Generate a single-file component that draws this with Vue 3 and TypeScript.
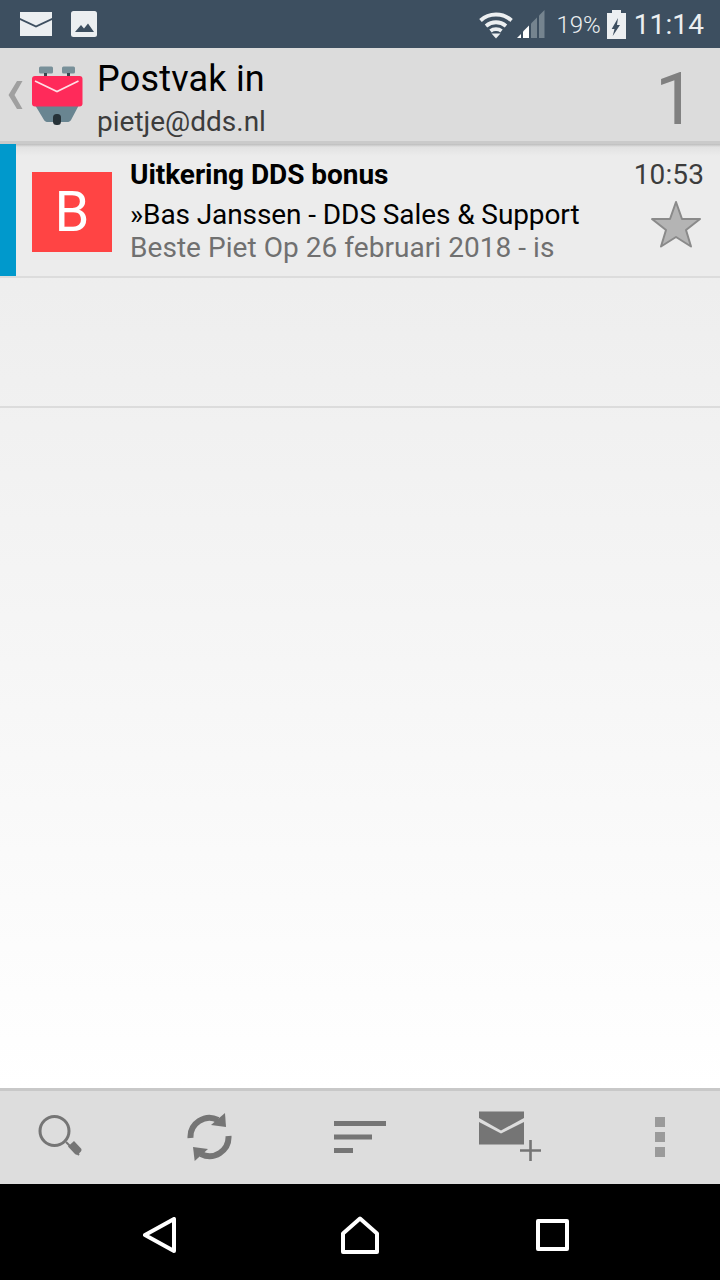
<template>
  <div class="screen">
    <div class="status-bar">
      <div class="status-left">
        <svg class="st-mail" width="32" height="24" viewBox="0 0 32 24">
          <path d="M0 0H32V6L16 13.5L0 6Z" fill="#eceff1" />
          <path d="M0 8L16 15.5L32 8V24H0Z" fill="#eceff1" />
        </svg>
        <svg class="st-image" width="26" height="26" viewBox="0 0 26 26">
          <rect width="26" height="26" rx="2.5" fill="#eceff1" />
          <path d="M4 21L10 14L13 17.5L17 12.5L23 21Z" fill="#3d4f60" />
        </svg>
      </div>
      <div class="status-right">
        <svg class="st-wifi" width="34" height="28" viewBox="0 0 34 28" fill="none" stroke="#eceff1" stroke-width="3.8">
          <path d="M1.5 9.5C10 1.5 24 1.5 32.5 9.5" />
          <path d="M7 15C13 10 21 10 27 15" />
          <path d="M11.5 20C14.5 17.6 19.5 17.6 22.5 20" />
          <path d="M12.5 22.5H21.5L17 27.5Z" fill="#eceff1" stroke="none" />
        </svg>
        <svg class="st-signal" width="28" height="28" viewBox="0 0 28 28">
          <path d="M0 28L4 24V28Z" fill="#fff" />
          <path d="M6 28V21.5L12 15.5V28Z" fill="#fff" />
          <path d="M14 28V13.5L20 7.5V28Z" fill="#75848f" />
          <path d="M22 28V5.5L27.5 0V28Z" fill="#75848f" />
        </svg>
        <span class="st-pct">19%</span>
        <svg class="st-battery" width="19" height="29" viewBox="0 0 19 29">
          <path d="M5 0H14V3H19V29H0V3H5Z" fill="#eceff1" />
          <path d="M11 8L4.7 19H7.5L5.7 26L13 15H10Z" fill="#3d4f60" />
        </svg>
        <span class="st-time">11:14</span>
      </div>
    </div>

    <header class="app-bar">
      <svg class="chevron" width="15" height="28" viewBox="0 0 15 28">
        <path d="M14.5 0H9L0.5 14L9 28H14.5L6.5 14Z" fill="#a0a0a0" />
      </svg>
      <svg class="logo" width="54" height="60" viewBox="0 0 54 60">
        <rect x="9" y="0.5" width="14" height="7" rx="1.5" fill="#789099" />
        <rect x="32" y="0.5" width="13" height="7" rx="1.5" fill="#789099" />
        <rect x="14" y="7" width="3" height="4" fill="#37474f" />
        <rect x="37" y="7" width="3" height="4" fill="#37474f" />
        <path d="M5 39H49L41 54C40 55.5 39 56 37 56H18C16 56 15 55.5 14 54Z" fill="#698591" />
        <rect x="23" y="48" width="8" height="11" rx="3.5" fill="#263238" />
        <rect x="2" y="10" width="50.5" height="30.5" rx="3" fill="#ff2a5a" />
        <path d="M5 15L27 25.5L48.5 15" fill="none" stroke="#ffdfe6" stroke-width="1.6" />
      </svg>
      <div class="titles">
        <div class="title">Postvak in</div>
        <div class="account">pietje@dds.nl</div>
      </div>
      <div class="unread">1</div>
    </header>

    <main class="list">
      <article class="row message">
        <div class="accent"></div>
        <div class="avatar">B</div>
        <div class="body">
          <div class="subject">Uitkering DDS bonus</div>
          <div class="sender">»Bas Janssen - DDS Sales &amp; Support</div>
          <div class="preview">Beste Piet Op 26 februari 2018 - is</div>
        </div>
        <div class="meta">
          <div class="time">10:53</div>
          <svg class="star" width="52" height="50" viewBox="0 0 52 50">
            <path d="M26 2L32 19H50L36 30L41 46.5L26 37L11 46.5L16 30L2 19H20Z" fill="#b4b4b4" stroke="#8a8a8a" stroke-width="2" stroke-linejoin="round" />
          </svg>
        </div>
      </article>
      <div class="row empty"></div>
    </main>

    <footer class="toolbar">
      <svg width="46" height="46" viewBox="0 0 46 46" fill="none">
        <circle cx="17.5" cy="17" r="14.5" stroke="#757575" stroke-width="3" />
        <path d="M29 28L42 41" stroke="#757575" stroke-width="2" />
        <path d="M31 32.5L37 27L44 34.5C45 36 44.5 37 43 38.5L41.5 40C40 41 39 41 38 40Z" fill="#757575" />
      </svg>
      <svg width="46" height="48" viewBox="0 0 46 48" fill="none">
        <path d="M3.5 25A19 19 0 0 1 31 7" stroke="#757575" stroke-width="6" />
        <path d="M38 0L39 14L24 12Z" fill="#757575" />
        <path d="M41.5 23A19 19 0 0 1 14 41" stroke="#757575" stroke-width="6" />
        <path d="M7.7 48L6 34L21 36Z" fill="#757575" />
      </svg>
      <svg width="52" height="32" viewBox="0 0 52 32">
        <rect y="0" width="52" height="5" fill="#757575" />
        <rect y="13.5" width="38" height="5" fill="#757575" />
        <rect y="27" width="19" height="5" fill="#757575" />
      </svg>
      <svg width="62" height="52" viewBox="0 0 62 52">
        <path d="M0 0.5H45V7L22 19.5L0 7Z" fill="#757575" />
        <path d="M0 11L22 22.5L45 11V33.5H0Z" fill="#757575" />
        <path d="M41 39.5H62M51.5 29V50" stroke="#757575" stroke-width="2.6" />
      </svg>
      <svg width="10" height="40" viewBox="0 0 10 40">
        <rect y="0" width="10" height="10" fill="#9a9a9a" />
        <rect y="15" width="10" height="10" fill="#9a9a9a" />
        <rect y="30" width="10" height="10" fill="#9a9a9a" />
      </svg>
    </footer>

    <nav class="nav-bar">
      <svg width="33" height="36" viewBox="0 0 33 36" fill="none" stroke="#fff" stroke-width="4" stroke-linejoin="round">
        <path d="M31 2V34L2 18Z" />
      </svg>
      <svg class="nav-home" width="38" height="38" viewBox="0 0 38 38" fill="none" stroke="#fff" stroke-width="4" stroke-linejoin="round">
        <path d="M19 2.5L36 17.5V36H2V17.5Z" />
      </svg>
      <svg width="33" height="32" viewBox="0 0 33 32" fill="none" stroke="#fff" stroke-width="4" stroke-linejoin="round">
        <rect x="2" y="2" width="29" height="28" />
      </svg>
    </nav>
  </div>
</template>

<script setup lang="ts">
</script>

<style>
html,
body {
  margin: 0;
  background: #fff;
}
</style>

<style scoped>
.screen {
  display: flex;
  flex-direction: column;
  width: 720px;
  height: 1280px;
  overflow: hidden;
  font-family: Roboto, "Liberation Sans", sans-serif;
  background: linear-gradient(#ebebeb 144px, #ffffff 1088px);
}

.status-bar {
  display: flex;
  justify-content: space-between;
  align-items: center;
  flex: none;
  height: 48px;
  padding: 0 16px 0 20px;
  background: #3d4f60;
  color: #eceff1;
}

.status-left,
.status-right {
  display: flex;
  align-items: center;
}

.status-left {
  gap: 19px;
}

.st-wifi {
  margin: 1px 4px 0 0;
}

.st-pct {
  margin: 2px 6px 0 11px;
  font-size: 24px;
  font-weight: 300;
  line-height: 28px;
}

.st-time {
  margin: 2px 0 0 8px;
  font-size: 28px;
  line-height: 32px;
  letter-spacing: 0.1px;
}

.app-bar {
  display: flex;
  align-items: center;
  flex: none;
  height: 93px;
  padding: 0 24px 0 8px;
  background: #dcdcdc;
  border-bottom: 3px solid #cacaca;
}

.logo {
  margin: 2px 13px 0 7px;
}

.titles {
  flex: 1;
  min-width: 0;
  padding-top: 7px;
}

.title {
  font-size: 36px;
  line-height: 44px;
  letter-spacing: 0.2px;
  color: #000;
}

.account {
  margin-top: 3px;
  font-size: 28px;
  line-height: 36px;
  color: #3c3c3c;
}

.unread {
  margin-top: 9px;
  font-size: 73px;
  line-height: 84px;
  color: #808080;
}

.list {
  flex: 1;
  min-height: 0;
}

.row {
  box-sizing: border-box;
  border-bottom: 2px solid #dcdcdc;
}

.message {
  display: flex;
  height: 134px;
  background: linear-gradient(#bcbcbc, #e2e2e2 3px, #ececec 12px);
}

.empty {
  height: 130px;
}

.accent {
  flex: none;
  width: 16px;
  background: #0099cc;
}

.avatar {
  display: flex;
  justify-content: center;
  align-items: center;
  flex: none;
  width: 80px;
  height: 80px;
  margin: 28px 18px 0 16px;
  background: #ff4444;
  color: #fff;
  font-size: 56px;
}

.body {
  flex: 1;
  min-width: 0;
  padding-top: 13px;
}

.subject {
  font-size: 28px;
  font-weight: 700;
  line-height: 36px;
  letter-spacing: -0.05px;
  color: #000;
}

.sender {
  margin-top: 4px;
  font-size: 28px;
  line-height: 36px;
  letter-spacing: -0.09px;
  color: #000;
}

.preview {
  font-size: 28px;
  line-height: 30px;
  letter-spacing: 0.05px;
  color: #707070;
}

.meta {
  display: flex;
  flex-direction: column;
  align-items: flex-end;
  flex: none;
  padding: 13px 16px 0 0;
}

.time {
  font-size: 28px;
  line-height: 36px;
  letter-spacing: 0.1px;
  color: #3c3c3c;
}

.star {
  margin: 7px 2px 0 0;
}

.toolbar {
  display: grid;
  grid-template-columns: repeat(5, 150px);
  justify-content: center;
  justify-items: center;
  align-items: center;
  flex: none;
  box-sizing: border-box;
  height: 96px;
  padding-bottom: 2px;
  background: #dddddd;
  border-top: 3px solid #c8c8c8;
}

.nav-bar {
  display: flex;
  align-items: center;
  flex: none;
  box-sizing: border-box;
  height: 96px;
  padding: 6px 0 0 143px;
  background: #000;
}

.nav-home {
  margin: 0 157px 0 165px;
}
</style>
